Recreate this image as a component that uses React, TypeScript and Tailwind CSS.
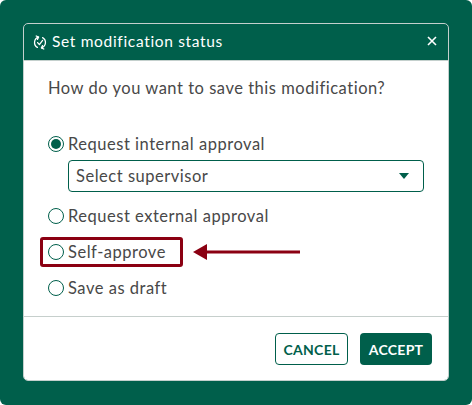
import React from 'react';

const options = ['Request external approval', 'Self-approve', 'Save as draft'];

const Radio: React.FC<{ checked?: boolean; label: string }> = ({ checked = false, label }) => (
  <label className="flex items-center h-[20px] gap-[4px]">
    <span className="w-[16px] h-[16px] rounded-full border border-[#005f4b] flex items-center justify-center shrink-0 bg-white">
      {checked && <span className="w-[10px] h-[10px] rounded-full bg-[#005f4b]"></span>}
    </span>
    <span>{label}</span>
  </label>
);

export default function App() {
  return (
    <div className="w-[472px] h-[405px] bg-[#005f4b] rounded-[6px] p-[23px] pb-[24px] font-['Lato',sans-serif]">
      <div className="relative w-[426px] h-[358px] rounded-[5px] border border-[#c4d0cd] overflow-hidden flex flex-col">
        <div className="h-[36px] shrink-0 flex items-center justify-between pl-[9px] pr-[11px] text-white text-[15.5px] tracking-[0.67px]">
          <div className="flex items-center gap-[5px]">
            <svg width="14" height="15" viewBox="0 0 14 15" fill="none" stroke="currentColor" strokeWidth="1.3" strokeLinecap="round" strokeLinejoin="round">
              <path d="M5.4 2.2A5.6 5.6 0 0 0 4.4 12.4" />
              <path d="M3.2 1 5.6 2.2 4.4 4.4" />
              <path d="M8.6 12.8A5.6 5.6 0 0 0 9.6 2.6" />
              <path d="M10.8 14 8.4 12.8 9.6 10.6" />
              <path d="M4.6 7.6 6.4 9.6 9.6 5.4" />
            </svg>
            <span>Set modification status</span>
          </div>
          <svg className="mb-[3px]" width="10" height="10" viewBox="0 0 10 10" stroke="currentColor" strokeWidth="1.6">
            <path d="M1 1 9 9M9 1 1 9" />
          </svg>
        </div>
        <div className="flex-1 bg-white border-t border-[#c4d0cd] flex flex-col text-[#484848] text-[16.5px] tracking-[0.52px]">
          <p className="mt-[16px] ml-[24px] h-[22px] leading-[22px]">How do you want to save this modification?</p>
          <div className="mt-[35px] ml-[24px] flex flex-col">
            <Radio checked label="Request internal approval" />
            <div className="mt-[6px] ml-[20px] w-[356px] h-[32px] rounded-[4px] border border-[#005f4b] flex items-center justify-between pl-[7px] pr-[14px]">
              <span>Select supervisor</span>
              <span className="w-0 h-0 border-x-[5px] border-x-transparent border-t-[6px] border-t-[#005f4b]"></span>
            </div>
            <div className="mt-[14px] flex flex-col gap-[16px]">
              {options.map((option) => (
                <Radio key={option} label={option} />
              ))}
            </div>
          </div>
          <div className="mt-[18px] h-[1px] bg-[#c6cfcc]"></div>
          <div className="flex justify-end gap-[12px] mt-[16px] pr-[16px]">
            <button className="w-[73px] h-[32px] rounded-[4px] border border-[#005f4b] bg-white text-[#005f4b] text-[14px] font-bold tracking-[0.3px]">CANCEL</button>
            <button className="w-[72px] h-[32px] rounded-[4px] bg-[#005f4b] text-white text-[14px] font-bold tracking-[0.3px]">ACCEPT</button>
          </div>
        </div>
        {/* callout over the dialog */}
        <div className="absolute left-[16px] top-[213px] w-[143px] h-[30px] rounded-[3px] border-[3px] border-[#8b0012]"></div>
        <svg className="absolute left-[169px] top-[218px]" width="108" height="20" viewBox="0 0 108 20">
          <path d="M0 10 14 2V8.6H107V11.4H14V18Z" fill="#8b0012" />
        </svg>
      </div>
    </div>
  );
}
